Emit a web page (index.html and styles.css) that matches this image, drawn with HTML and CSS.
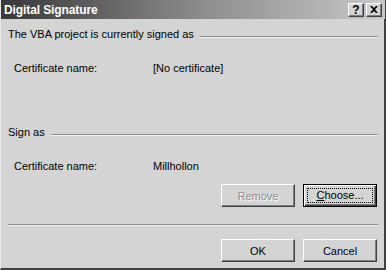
FILE: index.html
```html
<!DOCTYPE html>
<html lang="en">
<head>
    <meta charset="UTF-8">
    <title>Digital Signature</title>
    <link rel="stylesheet" href="styles.css">
</head>
<body>
    <div class="window">
        <div class="titlebar">
            <span class="title">Digital Signature</span>
            <div class="title-buttons">
                <span class="tbtn">?</span>
                <span class="tbtn close">
                    <svg width="8" height="7" viewBox="0 0 8 7"><path d="M0 0h2l2 2 2-2h2L5 3.5 8 7H6L4 5 2 7H0l3-3.5z" fill="#000"/></svg>
                </span>
            </div>
        </div>
        <div class="content">
            <div class="group-head">
                <span>The VBA project is currently signed as</span>
                <span class="rule"></span>
            </div>
            <div class="cert-row">
                <span class="label">Certificate name:</span>
                <span>[No certificate]</span>
            </div>

            <div class="group-head sign-as">
                <span>Sign as</span>
                <span class="rule"></span>
            </div>
            <div class="cert-row">
                <span class="label">Certificate name:</span>
                <span>Millhollon</span>
            </div>

            <div class="button-row">
                <button class="btn" disabled>Remove</button>
                <button class="btn default"><span class="focus"><u>C</u>hoose...</span></button>
            </div>

            <div class="separator"></div>

            <div class="button-row bottom">
                <button class="btn">OK</button>
                <button class="btn">Cancel</button>
            </div>
        </div>
    </div>
</body>
</html>
```

FILE: styles.css
```css
body {
    margin: 0;
    font-family: "Liberation Sans", Arial, sans-serif;
    font-size: 11px;
    color: #000;
    background: #d4d4d4;
}
.window {
    box-sizing: border-box;
    width: 386px;
    height: 270px;
    background: #d4d4d4;
    border-left: 1px solid #e8e8e8;
    border-right: 2px solid #404040;
    border-bottom: 2px solid #404040;
    display: flex;
    flex-direction: column;
}
.titlebar {
    height: 19px;
    margin-right: -1px;
    display: flex;
    justify-content: space-between;
    align-items: center;
    background: linear-gradient(to right, #383838, #8c8c8c 52%, #c8c8c8);
    padding: 0 3px 0 3px;
}
.title {
    color: #fff;
    font-weight: bold;
    font-size: 12px;
    letter-spacing: -0.1px;
}
.title-buttons {
    display: flex;
    gap: 2px;
}
.tbtn {
    box-sizing: border-box;
    width: 16px;
    height: 14px;
    display: flex;
    justify-content: center;
    align-items: center;
    background: #d4d4d4;
    border: 1px solid;
    border-color: #fff #404040 #404040 #fff;
    box-shadow: inset -1px -1px #808080;
    font-weight: bold;
    font-size: 12px;
    line-height: 1;
}
.content {
    flex: 1;
    padding: 8px 6px 0 7px;
}
.group-head {
    display: flex;
    align-items: center;
    height: 14px;
}
.rule {
    flex: 1;
    margin-left: 6px;
    margin-top: 5px;
    border-top: 1px solid #8c8c8c;
    border-bottom: 1px solid #f4f4f4;
}
.sign-as {
    margin-top: 49px;
}
.cert-row {
    display: flex;
    height: 14px;
    margin-top: 21px;
    padding-left: 6px;
}
.cert-row .label {
    width: 139px;
}
.button-row {
    display: flex;
    justify-content: flex-end;
    gap: 8px;
    margin-top: 10px;
    padding-right: 1px;
}
.btn {
    box-sizing: border-box;
    width: 74px;
    height: 23px;
    padding: 0;
    font-family: inherit;
    font-size: 11px;
    color: #000;
    background: #d4d4d4;
    border: 1px solid;
    border-color: #fff #404040 #404040 #fff;
    box-shadow: inset -1px -1px #808080;
}
.btn:disabled {
    color: #8c8c8c;
    text-shadow: 1px 1px #fff;
}
.btn.default {
    border: 1px solid #000;
    box-shadow: inset 1px 1px #fff, inset -1px -1px #404040, inset -2px -2px #808080;
    padding: 3px;
}
.focus {
    display: block;
    height: 100%;
    box-sizing: border-box;
    border: 1px dotted #000;
    line-height: 13px;
}
.separator {
    margin-top: 17px;
    border-top: 1px solid #8c8c8c;
    border-bottom: 1px solid #f4f4f4;
}
.button-row.bottom {
    margin-top: 13px;
}
```
